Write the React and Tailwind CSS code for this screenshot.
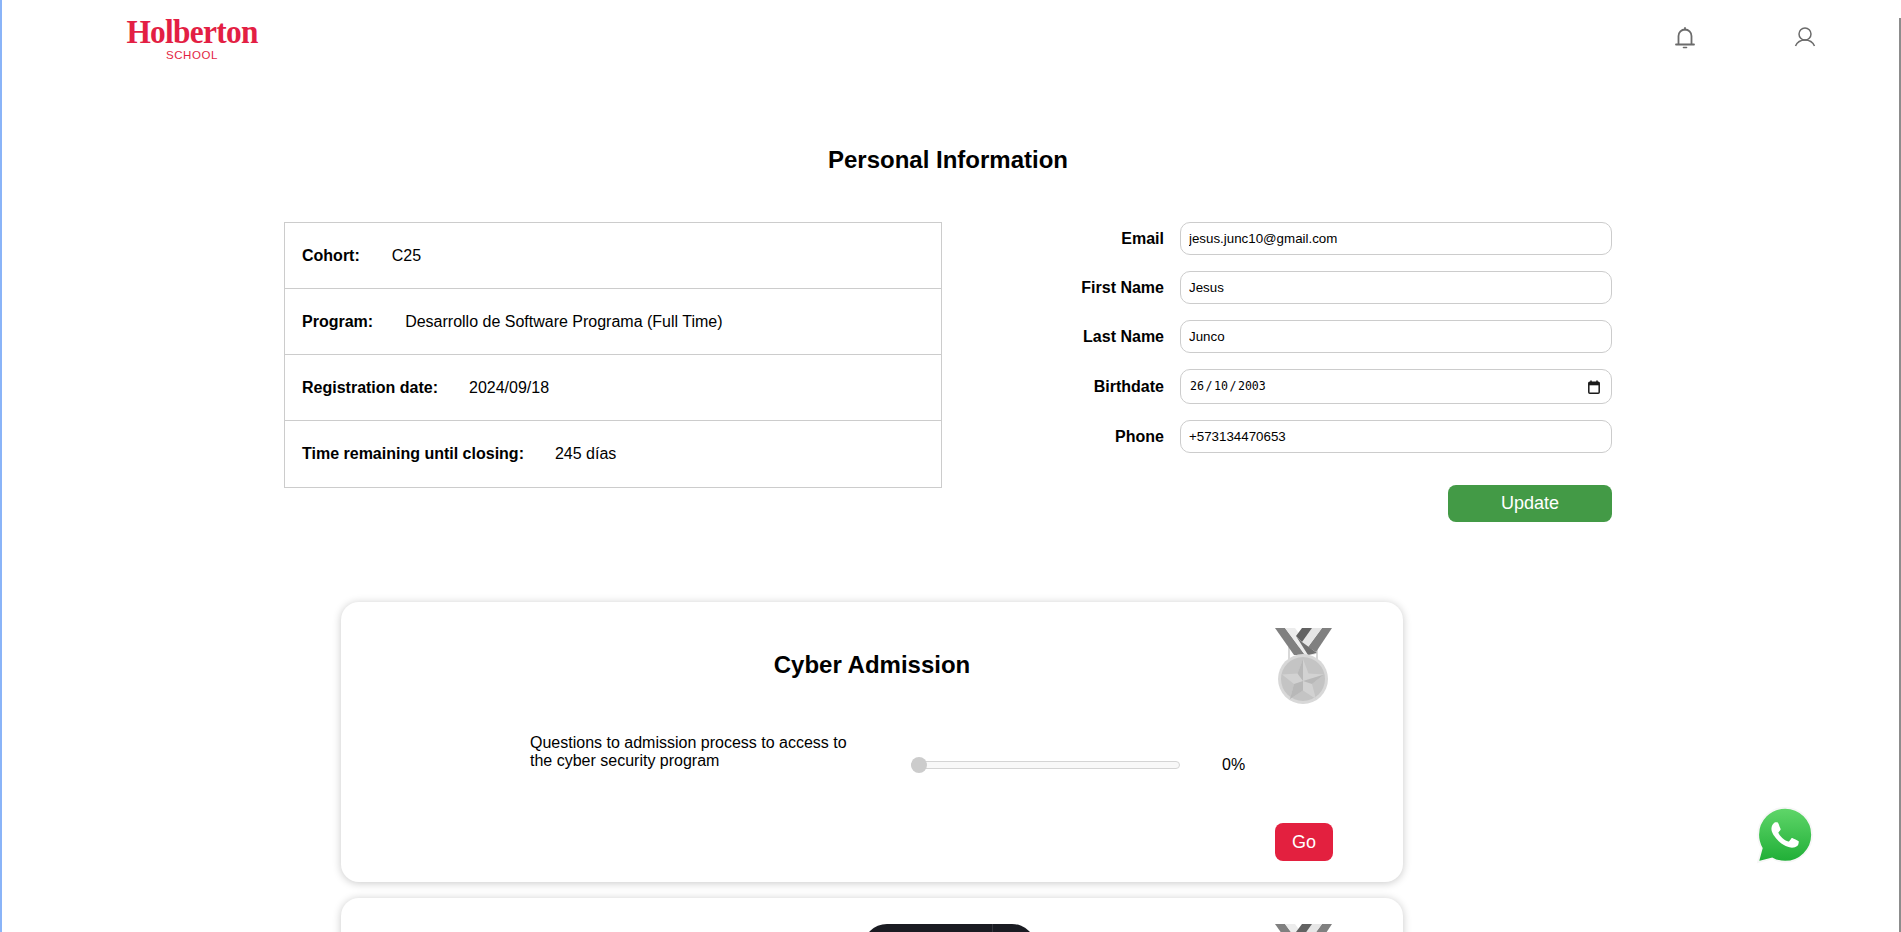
import React from "react";

const sans = "font-['Liberation_Sans',Arial,sans-serif]";

function Logo() {
  return (
    <div className="flex flex-col items-center w-[134px] text-[#e31f44]">
      <span className="scale-x-[0.95] font-['Liberation_Serif',serif] font-bold text-[33px] leading-[30px] tracking-[-0.75px] whitespace-nowrap">Holberton</span>
      <span className="mt-[2px] text-[11.5px] leading-[12px] tracking-[0.6px]">SCHOOL</span>
    </div>
  );
}

function Bell() {
  return (
    <svg width="20" height="22" viewBox="0 0 20 22" fill="none" stroke="#6b6b6b" strokeWidth="1.8">
      <path d="M3.5 17V9a6.5 6.5 0 0 1 13 0v8" />
      <path d="M1 17.5h18" strokeLinecap="round" />
      <path d="M10 1v1.5" strokeLinecap="round" />
      <path d="M8.5 20.5h3" strokeWidth="1.6" strokeLinecap="round" />
    </svg>
  );
}

function User() {
  return (
    <svg width="22" height="20" viewBox="0 0 22 20" fill="none" stroke="#6b6b6b" strokeWidth="1.5">
      <circle cx="11" cy="7" r="6" />
      <path d="M1.5 19c1.6-3.6 5-6 9.5-6s7.900 2.400 9.500 6" />
    </svg>
  );
}

function Medal() {
  return (
    <svg width="60" height="78" viewBox="1275 628 60 78">
      <rect x="1290" y="648" width="28" height="14" fill="none" stroke="#d8d8d8" strokeWidth="2" />
      <polygon points="1276,628 1286,628 1306,655 1295,655" fill="#808080" />
      <polygon points="1286,628 1296,628 1316,655 1306,655" fill="#ececec" />
      <polygon points="1323,628 1333,628 1317,652 1309,647" fill="#808080" />
      <polygon points="1313,628 1323,628 1309,647 1303,642" fill="#e6e6e6" />
      <polygon points="1303,628 1313,628 1303,642 1297,636" fill="#626262" />
      <polygon points="1297,636 1303,642 1318,653 1309,655" fill="#707070" />
      <circle cx="1304" cy="679" r="25" fill="#d8d8d8" />
      <circle cx="1304" cy="679" r="22" fill="#c4c4c4" />
      <path d="M1304 659 1309.500 673.500 1325 674.500 1313 684 1317 699 1304 690.500 1291 699 1295 684 1283 674.500 1298.500 673.500Z" fill="#d2d2d2" />
      <path d="M1304 659 1304 681 1298.500 673.500Z M1304 681 1325 674.500 1313 684Z M1304 681 1304 690.500 1291 699 1295 684Z" fill="#b8b8b8" />
    </svg>
  );
}

function Whatsapp() {
  return (
    <svg width="58" height="58" viewBox="-0.800 -0.800 25.600 25.600">
      <defs>
        <linearGradient id="wa" x1="0" y1="0" x2="0" y2="1">
          <stop offset="0" stopColor="#60d66a" />
          <stop offset="1" stopColor="#1fae36" />
        </linearGradient>
      </defs>
      <path d="M.057 24l1.687-6.163a11.867 11.867 0 01-1.587-5.946C.16 5.335 5.495 0 12.050 0a11.817 11.817 0 018.413 3.488 11.824 11.824 0 013.480 8.414c-.003 6.557-5.338 11.892-11.893 11.892a11.900 11.900 0 01-5.688-1.448L.057 24z" fill="url(#wa)" stroke="#f7f7f7" strokeWidth="0.800" />
      <path d="M17.472 14.382c-.297-.149-1.758-.867-2.030-.967-.273-.099-.471-.148-.670.150-.197.297-.767.966-.940 1.164-.173.199-.347.223-.644.075-.297-.150-1.255-.463-2.390-1.475-.883-.788-1.480-1.761-1.653-2.059-.173-.297-.018-.458.130-.606.134-.133.298-.347.446-.520.149-.174.198-.298.298-.497.099-.198.050-.371-.025-.520-.075-.149-.669-1.612-.916-2.207-.242-.579-.487-.500-.669-.510-.173-.008-.371-.010-.570-.010-.198 0-.520.074-.792.372-.272.297-1.040 1.016-1.040 2.479 0 1.462 1.065 2.875 1.213 3.074.149.198 2.096 3.200 5.077 4.487.709.306 1.262.489 1.694.625.712.227 1.360.195 1.871.118.571-.085 1.758-.719 2.006-1.413.248-.694.248-1.289.173-1.413-.074-.124-.272-.198-.570-.347" fill="#fff" />
    </svg>
  );
}

function InfoRow({ label, value, last, extra }) {
  return (
    <div className={`flex items-center h-[66px] pl-[17px] text-[16px] text-black ${extra || "gap-[32px]"} ${last ? "" : "border-b border-[#cccccc]"}`}>
      <span className="font-bold">{label}</span>
      <span>{value}</span>
    </div>
  );
}

function Field({ label, value }) {
  return (
    <div className="flex items-center gap-[16px]">
      <label className="w-[164px] text-right font-bold text-[16px] text-black">{label}</label>
      <input
        readOnly
        defaultValue={value}
        className="w-[432px] h-[33px] rounded-[10px] border border-[#cccccc] px-[8px] text-[13.33px] text-black outline-none bg-white"
      />
    </div>
  );
}

function Card({ children }) {
  return (
    <div className="w-[1062px] shrink-0 rounded-[18px] bg-white shadow-[0_1px_9px_rgba(0,0,0,0.22)]">
      {children}
    </div>
  );
}

export default function App() {
  return (
    <div className={`relative h-[932px] overflow-hidden bg-white ${sans}`}>
      <div className="absolute left-0 top-0 h-full w-[2px] bg-[#8ab4f8]" />
      <div className="absolute right-0 top-[18px] h-full w-[2px] bg-[#8c8c8c]" />

      <header className="flex h-[80px] items-start">
        <div className="ml-[125px] mt-[17px]"><Logo /></div>
        <div className="ml-auto mr-[85px] mt-[27px] flex items-start gap-[99px]">
          <Bell />
          <User />
        </div>
      </header>

      <h1 className="mt-[66px] h-[76px] pr-[5px] text-center text-[24px] leading-[28px] font-bold text-black">Personal Information</h1>

      <section className="flex items-start pl-[284px]">
        <div className="w-[658px] border border-[#cccccc]">
          <InfoRow label="Cohort:" value="C25" />
          <InfoRow label="Program:" value="Desarrollo de Software Programa (Full Time)" />
          <InfoRow label="Registration date:" value="2024/09/18" extra="gap-[31px]" />
          <InfoRow label="Time remaining until closing:" value="245 días" last extra="gap-[31px] pl-[17.5px]" />
        </div>

        <div className="ml-[58px] flex flex-col">
          <div className="flex flex-col gap-[16px]">
            <Field label="Email" value="jesus.junc10@gmail.com" />
            <Field label="First Name" value="Jesus" />
            <Field label="Last Name" value="Junco" />
            <div className="flex items-center gap-[16px]">
              <label className="w-[164px] text-right font-bold text-[16px] text-black">Birthdate</label>
              <div className="flex w-[432px] h-[35px] items-center justify-between rounded-[10px] border border-[#cccccc] pl-[9px] pr-[11px] font-['DejaVu_Sans_Mono',monospace] text-[11.6px] text-black bg-white">
                <span className="flex items-center pt-[1px]">
                  <span>26</span><span className="px-[1.5px]">/</span><span>10</span><span className="px-[1.5px]">/</span><span>2003</span>
                </span>
                <svg width="12" height="14" viewBox="0 0 12 14" fill="none">
                  <path d="M3 .5v2M9 .5v2" stroke="#1a1a1a" strokeWidth="1.500" />
                  <rect x="0.800" y="2.300" width="10.400" height="10.900" rx="1" stroke="#1a1a1a" strokeWidth="1.500" />
                  <rect x="0.800" y="2.300" width="10.400" height="3" fill="#1a1a1a" />
                </svg>
              </div>
            </div>
            <Field label="Phone" value="+573134470653" />
          </div>
          <div className="mt-[32px] flex justify-end">
            <button className="h-[37px] w-[164px] rounded-[8px] bg-[#439a46] text-[18px] text-white">Update</button>
          </div>
        </div>
      </section>

      <section className="mt-[80px] flex flex-col gap-[16px] pl-[341px]">
        <Card>
          <div className="flex h-[280px] flex-col">
            <div className="grid grid-cols-[1fr_auto_1fr] px-[69px] pt-[26px]">
              <div />
              <h2 className="pt-[23px] text-[24px] leading-[28px] font-bold text-black">Cyber Admission</h2>
              <div className="flex justify-end"><Medal /></div>
            </div>
            <div className="mt-[28px] flex items-start pl-[189px]">
              <p className="w-[381px] pr-[50px] text-[16px] leading-[18px] text-black">
                Questions to admission process to access to the cyber security program
              </p>
              <div className="relative mt-[23px] flex h-[16px] w-[269px] items-center">
                <div className="h-[8px] w-full rounded-full border border-[#d4d4d4] bg-[#f8f8f8]" />
                <div className="absolute left-0 top-0 h-[16px] w-[16px] rounded-full bg-[#cccccc]" />
              </div>
              <span className="ml-[42px] mt-[22px] text-[16px] leading-[18px] text-black">0%</span>
            </div>
            <div className="mt-[49px] flex justify-end pr-[70px]">
              <button className="h-[38px] w-[58px] rounded-[8px] bg-[#e3203f] text-[18px] text-white">Go</button>
            </div>
          </div>
        </Card>
        <Card>
          <div className="relative h-[280px]">
            <div className="absolute left-[522px] top-[26px] flex h-[60px] w-[173px] justify-end rounded-t-[24px] bg-[#1a1b22]">
              <div className="mr-[43px] h-full w-[1px] bg-[#33343b]" />
            </div>
            <div className="absolute right-[69px] top-[26px]"><Medal /></div>
          </div>
        </Card>
      </section>

      <div className="absolute left-[1756px] top-[806px]"><Whatsapp /></div>
    </div>
  );
}
